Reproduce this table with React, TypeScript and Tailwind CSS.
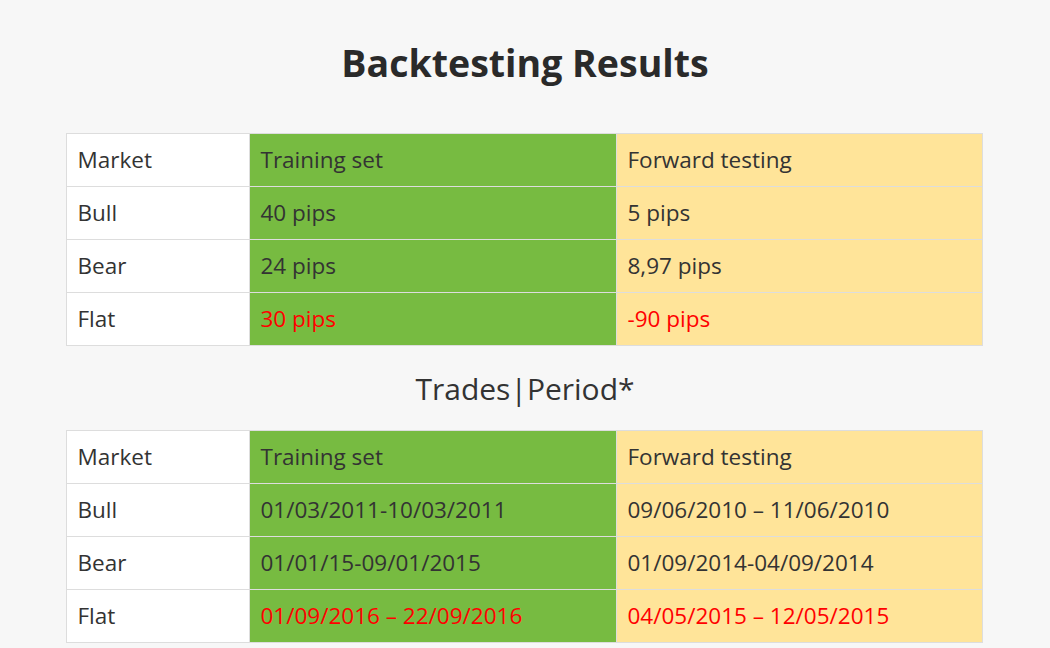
import React from 'react';

type Row = { market: string; training: string; forward: string; red?: boolean };

const results: Row[] = [
  { market: 'Bull', training: '40 pips', forward: '5 pips' },
  { market: 'Bear', training: '24 pips', forward: '8,97 pips' },
  { market: 'Flat', training: '30 pips', forward: '-90 pips', red: true },
];

const periods: Row[] = [
  { market: 'Bull', training: '01/03/2011-10/03/2011', forward: '09/06/2010 – 11/06/2010' },
  { market: 'Bear', training: '01/01/15-09/01/2015', forward: '01/09/2014-04/09/2014' },
  { market: 'Flat', training: '01/09/2016 – 22/09/2016', forward: '04/05/2015 – 12/05/2015', red: true },
];

function ResultTable({ rows }: { rows: Row[] }) {
  return (
    <table className="w-[917px] table-fixed border-collapse border border-[#dddddd] text-[22.5px] text-[#333333]">
      <colgroup>
        <col className="w-[183px]" />
        <col className="w-[367px]" />
        <col />
      </colgroup>
      <tbody>
        <tr className="h-[53px]">
          <td className="border border-[#dddddd] bg-white pb-[1px] pl-[11px]">Market</td>
          <td className="border border-[#dddddd] bg-[#77bb41] pb-[1px] pl-[11px]">Training set</td>
          <td className="border border-[#dddddd] bg-[#ffe499] pb-[1px] pl-[11px]">Forward testing</td>
        </tr>
        {rows.map((r) => (
          <tr key={r.market} className="h-[53px]">
            <td className="border border-[#dddddd] bg-white pb-[1px] pl-[11px]">{r.market}</td>
            <td
              className={`border border-[#dddddd] bg-[#77bb41] pb-[1px] pl-[11px] ${r.red ? 'text-[#ff0000]' : ''}`}
            >
              {r.training}
            </td>
            <td
              className={`border border-[#dddddd] bg-[#ffe499] pb-[1px] pl-[11px] ${r.red ? 'text-[#ff0000]' : ''}`}
            >
              {r.forward}
            </td>
          </tr>
        ))}
      </tbody>
    </table>
  );
}

export default function App() {
  return (
    <div className="min-h-[648px] bg-[#f7f7f7] font-['Open_Sans',sans-serif] text-[#333333]">
      <div className="flex flex-col items-center pt-[37px]">
        <h1 className="text-[37.5px] font-bold leading-[52px] text-[#2a2a2a]">Backtesting Results</h1>
        <div className="mt-[44px] mr-[2px]">
          <ResultTable rows={results} />
        </div>
        <h2 className="mt-[19px] text-[30px] leading-[48px] text-[#333333]">Trades|Period*</h2>
        <div className="mt-[17px] mr-[2px]">
          <ResultTable rows={periods} />
        </div>
      </div>
    </div>
  );
}
